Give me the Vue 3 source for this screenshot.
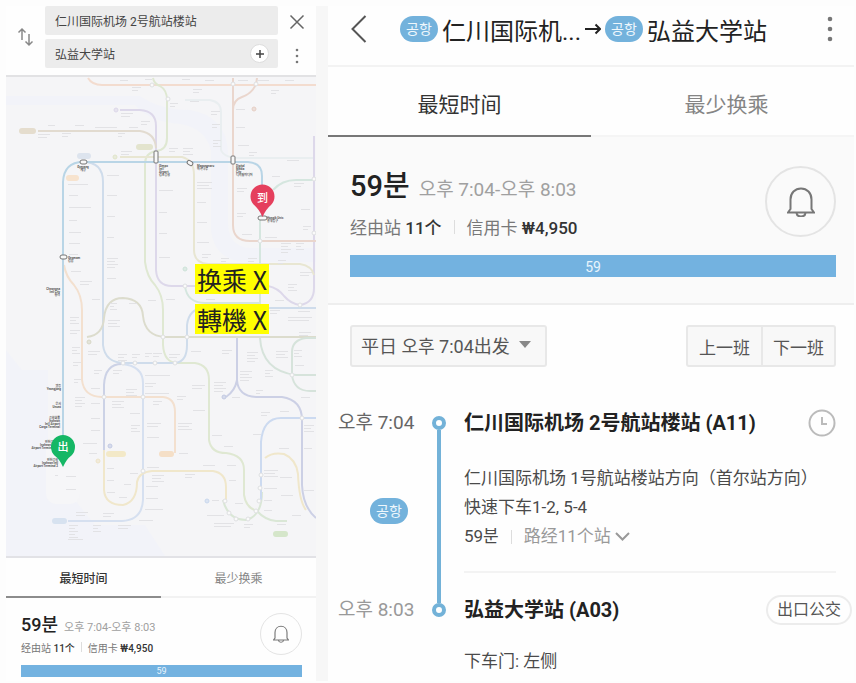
<script setup>
import { ref } from 'vue'

const from = ref('仁川国际机场 2号航站楼站')
const to = ref('弘益大学站')

const lines = [
  { c: '#f3dccf', d: 'M88 78Q92 85 102 85H316' },
  { c: '#dfe8d2', d: 'M153 78Q154 84 160 86Q167 90 167 100V138Q167 150 156 151Q145 153 145 164V262Q147 277 155 285Q163 295 163 310V345Q164 363 178 363H195Q209 365 209 380V440Q211 453 226 453Q244 455 244 470V495Q246 508 257 511' },
  { c: '#e9eef0', d: 'M185 100H210Q221 102 221 112V150Q224 158 240 158H314' },
  { c: '#ddd8ea', d: 'M120 110H140Q156 111 156 126V270Q157 286 172 286H268Q278 288 284 296Q291 304 300 305Q314 303 314 288V136' },
  { c: '#e2dbd0', d: 'M38 131H140Q155 133 156 148' },
  { c: '#ead6cd', d: 'M257 78Q256 92 242 97Q233 100 233 110M233 78V225Q233 241 250 241H316' },
  { c: '#e8e6d2', d: 'M120 157H182Q194 160 194 175V250Q194 263 208 264H300Q312 266 314 275' },
  { c: '#d5e6df', d: 'M260 218V303H205Q187 303 185 286M273 190Q282 180 296 180H314' },
  { c: '#cfdceb', d: 'M83 162Q103 162 103 182V345Q105 363 125 363H176Q187 361 187 345V325Q189 308 205 308H316' },
  { c: '#f3e0cf', d: 'M64 265Q66 277 74 285Q82 295 82 310V380Q84 397 102 397H163Q175 398 175 412V453' },
  { c: '#dcdccd', d: 'M87 337Q103 335 104 318Q106 298 123 298Q142 299 143 316Q145 336 165 337H316' },
  { c: '#ccd2e6', d: 'M104 450V385Q105 364 122 364' },
  { c: '#d6e0f0', d: 'M122 364Q143 366 143 383V500Q142 520 122 521H68' },
  { c: '#f0e7cb', d: 'M104 450V490Q105 505 123 505Q137 502 137 482Q139 472 152 471H213Q226 473 226 487V500' },
  { c: '#dae7d6', d: 'M223 500Q228 520 246 520Q262 516 262 492M257 511Q265 520 276 521H287' },
  { c: '#ccdaf0', d: 'M261 500V442Q263 418 281 418H316' },
  { c: '#f0e7cb', d: 'M265 458Q272 452 284 454Q296 459 298 474Q299 501 306 510' },
  { c: '#ccd0e5', d: 'M237 338V380Q238 396 256 397H282Q302 400 302 420V485Q303 507 316 518M237 380Q235 391 226 397' },
  { c: '#d6e3db', d: 'M260 338Q262 371 296 375H316M316 338H306Q292 340 292 352V375Q294 391 310 391H316' },
]

const pills = [
  { x: 19, y: 128, w: 17, c: '#e5ddce' },
  { x: 136, y: 144, w: 17, c: '#e3e4ce' },
  { x: 77, y: 153, w: 14, c: '#dde4ee' },
  { x: 66, y: 175, w: 13, c: '#f7e3ce' },
  { x: 106, y: 451, w: 20, c: '#f3e9c8' },
  { x: 159, y: 451, w: 15, c: '#f5dfc7' },
  { x: 52, y: 518, w: 15, c: '#d7e2f0' },
  { x: 273, y: 531, w: 15, c: '#d5e6ca' },
]

const rings = [[116, 110, '#ddd8ea'], [115, 157, '#e0e5ca'], [254, 109, '#e6d0c6'], [89, 342, '#d8d8c7'], [185, 269, '#cde3d8'], [224, 397, '#c2cae2'], [110, 446, '#c3cbe4'], [207, 501, '#c9d8ee'], [98, 461, '#eee4c8']]

const stops = [[152, 85], [168, 99], [233, 84], [256, 84], [314, 179], [314, 233], [260, 241], [185, 286], [300, 305], [123, 363], [135, 363], [155, 363], [175, 363], [104, 397], [143, 397], [143, 471], [302, 418], [292, 375], [163, 337], [187, 337], [225, 501], [229, 513], [236, 519], [248, 519], [256, 511], [261, 475], [260, 488], [259, 501]]

// x, y, width, number of rows of a faint station label
const faint = [
  [120, 80, 8, 1], [145, 79, 7, 1], [182, 79, 8, 1], [205, 80, 9, 1], [238, 80, 10, 1], [285, 80, 9, 1], [257, 80, 12, 1], [132, 87, 9, 2], [170, 103, 8, 2], [190, 101, 9, 1], [211, 111, 9, 2], [236, 109, 9, 1], [193, 89, 9, 2], [271, 90, 8, 2],
  [121, 113, 12, 2], [141, 121, 9, 2], [38, 134, 12, 2], [48, 125, 7, 1], [62, 133, 9, 2], [75, 125, 9, 1], [95, 127, 22, 1], [118, 133, 7, 2], [129, 127, 9, 1], [121, 151, 11, 2], [169, 148, 9, 2], [183, 148, 10, 3],
  [212, 124, 8, 2], [213, 140, 8, 3], [236, 127, 9, 1], [238, 145, 11, 1], [249, 152, 8, 2], [287, 160, 12, 1], [68, 184, 20, 1], [69, 195, 9, 1], [69, 207, 22, 1], [69, 220, 8, 1], [69, 232, 12, 1], [69, 243, 11, 1], [69, 254, 9, 1], [71, 271, 10, 1], [80, 281, 12, 2],
  [107, 175, 12, 1], [107, 195, 10, 1], [107, 216, 8, 1], [107, 237, 7, 1], [107, 258, 11, 4], [107, 278, 9, 1], [92, 299, 8, 1], [110, 303, 7, 3], [129, 303, 8, 1], [148, 300, 8, 1], [166, 299, 9, 1], [159, 190, 14, 1], [159, 212, 8, 1], [159, 233, 8, 1], [159, 257, 11, 1],
  [197, 182, 15, 3], [197, 202, 9, 1], [197, 222, 10, 1], [197, 242, 12, 1], [202, 254, 9, 2], [221, 258, 8, 2], [237, 188, 10, 2], [237, 213, 9, 2], [242, 234, 10, 1], [265, 237, 12, 1], [281, 243, 10, 4], [296, 243, 8, 3], [272, 176, 8, 1], [294, 183, 10, 2], [301, 209, 9, 1], [303, 226, 8, 2],
  [221, 265, 10, 2], [248, 258, 9, 2], [278, 260, 8, 2], [300, 272, 12, 2], [288, 284, 9, 3], [270, 310, 10, 2], [288, 317, 24, 2], [275, 300, 9, 1], [298, 311, 12, 1], [206, 299, 9, 1],
  [70, 317, 9, 3], [70, 330, 10, 2], [72, 347, 8, 3], [73, 362, 8, 2], [74, 379, 7, 2], [88, 351, 12, 2], [94, 370, 8, 2], [108, 320, 12, 3], [118, 354, 9, 3], [132, 354, 8, 2], [145, 353, 7, 2], [153, 353, 9, 2], [169, 354, 11, 2], [191, 351, 10, 1],
  [145, 375, 25, 1], [145, 383, 11, 2], [113, 370, 9, 2], [126, 389, 11, 3], [145, 393, 24, 1], [112, 401, 12, 3], [130, 413, 10, 1], [75, 397, 10, 4], [91, 388, 9, 1], [91, 403, 9, 1], [91, 418, 9, 1], [91, 430, 9, 1], [83, 443, 14, 1], [89, 453, 8, 1],
  [131, 425, 9, 3], [147, 423, 14, 2], [147, 437, 12, 1], [178, 423, 14, 3], [179, 453, 9, 1], [177, 396, 9, 2], [153, 401, 9, 2], [192, 385, 13, 2], [193, 410, 12, 1], [212, 435, 10, 1], [224, 446, 9, 1], [227, 465, 9, 1], [229, 480, 7, 1], [235, 503, 8, 1],
  [147, 467, 12, 1], [152, 475, 12, 3], [185, 474, 10, 2], [203, 465, 12, 1], [107, 468, 7, 1], [107, 480, 7, 1], [107, 492, 8, 1], [124, 484, 7, 1], [130, 473, 8, 1], [119, 497, 8, 1], [146, 486, 12, 1], [146, 498, 12, 1], [145, 509, 18, 1], [139, 520, 14, 1],
  [69, 525, 9, 5], [76, 512, 12, 2], [103, 513, 11, 2], [93, 525, 8, 3], [118, 525, 13, 2], [68, 539, 15, 1], [66, 476, 10, 1], [66, 489, 10, 1], [55, 475, 3, 1], [214, 382, 12, 4], [240, 371, 12, 4], [247, 352, 11, 4], [222, 350, 10, 2], [232, 397, 8, 1], [256, 390, 7, 2],
  [265, 370, 8, 3], [276, 351, 12, 3], [294, 350, 8, 3], [295, 365, 9, 1], [301, 397, 9, 1], [280, 411, 9, 1], [261, 412, 9, 2], [253, 434, 8, 1], [304, 425, 10, 3], [304, 448, 8, 1], [264, 470, 14, 3], [264, 488, 13, 1], [264, 500, 8, 1], [264, 510, 8, 1], [279, 448, 10, 1],
  [280, 477, 12, 1], [281, 495, 12, 1], [207, 515, 17, 1], [214, 523, 20, 2], [244, 524, 9, 2], [277, 524, 9, 1], [292, 515, 9, 1], [304, 490, 10, 1], [212, 500, 7, 1], [299, 332, 12, 2],
]
const bars = faint.flatMap(([x, y, w, n]) =>
  Array.from({ length: n }, (_, i) => ({ x, y: y + i * 3, w: i % 2 ? w - 3 : w })))

const names = [
  [83, 168, 'middle', ['Gyeyang', '계양']],
  [68, 259, 'start', ['Geomam', '검암']],
  [159, 167, 'start', ['Gimpo', "Int'l", 'Airport', '김포공항']],
  [197, 167, 'start', ['Magongnaru', '마곡나루']],
  [236, 167, 'start', ['Digital', 'Media', 'City', '디지털미디어']],
  [267, 219, 'start', ['Hongik Univ.', '홍대입구']],
  [60, 290, 'end', ['Cheongna', 'Intl City', '청라']],
  [61, 387, 'end', ['영종', 'Yeongjong']],
  [61, 405, 'end', ['운서', 'Unseo']],
  [60, 419, 'end', ['공항화물', 'Incheon', "Int'l Airport", 'Cargo Terminal']],
  [56, 443, 'end', ['인천공항', 'Incheon Intl', 'Airport Terminal 1']],
  [58, 461, 'end', ['인천공항', 'Incheon Intl', 'Airport Terminal 2']],
]
</script>

<template>
  <main class="page">
    <section class="panel overview">
      <form class="search" @submit.prevent>
        <button type="button" class="icon swap" aria-label="交换">
          <svg width="18" height="20" viewBox="0 0 18 20"><path d="M5 13V2M1.500 5.500L5 2L8.500 5.500M12 7V18M8.500 14.500L12 18L15.500 14.500" /></svg>
        </button>
        <div class="fields">
          <div class="field"><input v-model="from" aria-label="出发站" /></div>
          <div class="field">
            <input v-model="to" aria-label="到达站" />
            <button type="button" class="icon add" aria-label="添加">
              <svg width="10" height="10" viewBox="0 0 10 10"><path d="M5 1V9M1 5H9" /></svg>
            </button>
          </div>
        </div>
        <div class="side">
          <button type="button" class="icon" aria-label="关闭">
            <svg width="16" height="16" viewBox="0 0 16 16"><path d="M1.500 1.500L14.500 14.500M14.500 1.500L1.500 14.500" /></svg>
          </button>
          <button type="button" class="icon dots" aria-label="更多">
            <svg width="4" height="16" viewBox="0 0 4 16"><circle cx="2" cy="2" r="1.300" /><circle cx="2" cy="8" r="1.300" /><circle cx="2" cy="14" r="1.300" /></svg>
          </button>
        </div>
      </form>

      <div class="map">
        <svg class="network" viewBox="6 77 310 479" preserveAspectRatio="xMidYMid slice">
          <path class="water" d="M6 96H140Q160 110 190 110Q225 116 228 150V225Q230 247 250 248H316V262H245Q214 260 211 230V150Q205 128 180 124Q150 122 135 105H6ZM6 350L22 370H48V556H6ZM48 500H75L95 525H145L165 556H48Z" />
          <rect class="island" x="46" y="440" width="34" height="64" rx="10" />
          <path v-for="(l, i) in lines" :key="'l' + i" class="line" :d="l.d" :stroke="l.c" />
          <rect v-for="(p, i) in pills" :key="'p' + i" :x="p.x" :y="p.y" :width="p.w" height="6" rx="3" :fill="p.c" />
          <circle v-for="([x, y, c], i) in rings" :key="'r' + i" :cx="x" :cy="y" r="2" :fill="c" :stroke="c" fill-opacity=".6" />
          <rect v-for="(b, i) in bars" :key="'b' + i" class="label" :x="b.x" :y="b.y" :width="b.w" height="1" />
          <circle v-for="([x, y], i) in stops" :key="'s' + i" class="stop" :cx="x" :cy="y" r="2" />
          <path class="route" d="M63 460V182Q64 162 83 162H248Q262 163 262 176V216" />
          <g class="hub">
            <rect x="80" y="160" width="7" height="4" rx="2" />
            <rect x="60" y="255" width="7" height="4" rx="2" />
            <rect x="154" y="151" width="4" height="12" rx="1" />
            <rect x="187" y="161" width="6" height="4" rx="2" transform="rotate(35 190 163)" />
            <rect x="231" y="156" width="4" height="8" rx="1" />
            <rect x="258" y="216" width="9" height="4" rx="2" />
          </g>
          <text v-for="([x, y, a, rows], i) in names" :key="'n' + i" class="name" :text-anchor="a">
            <tspan v-for="(r, k) in rows" :key="k" :x="x" :y="y + k * 3">{{ r }}</tspan>
          </text>
          <path fill="#e53f5d" d="M262.500 217Q259 209 254 205A12 12 0 1 1 271 205Q266 209 262.500 217Z" />
          <text class="pin" x="262.500" y="202">到</text>
          <path fill="#15b765" d="M63 467Q59.500 459 54.500 455.500A12 12 0 1 1 71.500 455.500Q66.500 459 63 467Z" />
          <text class="pin" x="63" y="451">出</text>
        </svg>
        <div class="notes">
          <mark>换乘 X</mark>
          <mark>轉機 X</mark>
        </div>
      </div>

      <nav class="tabs">
        <button type="button" class="tab active">最短时间</button>
        <button type="button" class="tab">最少换乘</button>
      </nav>
      <div class="summary">
        <div class="top">
          <div class="facts">
            <p class="lead"><strong>59분</strong><span>오후 7:04-오후 8:03</span></p>
            <p class="meta">经由站 <b>11个</b><i></i>信用卡 <b>₩4,950</b></p>
          </div>
          <button type="button" class="bell" aria-label="提醒">
            <svg viewBox="0 0 28 30"><path d="M1 25.500H27L24.500 22V12.500C24.500 6 20 1.500 14 1.500S3.500 6 3.500 12.500V22ZM9.500 26Q10 29.500 14 29.500T18.500 26" /></svg>
          </button>
        </div>
        <div class="bar">59</div>
      </div>
    </section>

    <section class="panel detail">
      <header class="head">
        <button type="button" class="icon back" aria-label="返回">
          <svg width="16" height="28" viewBox="0 0 16 28"><path d="M14.500 1L1.500 14L14.500 27" /></svg>
        </button>
        <h1>
          <span class="badge">공항</span><span>仁川国际机...</span>
          <svg class="arrow" width="16" height="12" viewBox="0 0 16 12"><path d="M0 6H15M10.500 1.500L15 6L10.500 10.500" /></svg>
          <span class="badge">공항</span><span>弘益大学站</span>
        </h1>
        <button type="button" class="icon dots" aria-label="更多">
          <svg width="6" height="26" viewBox="0 0 6 26"><circle cx="3" cy="3" r="2.300" /><circle cx="3" cy="13" r="2.300" /><circle cx="3" cy="23" r="2.300" /></svg>
        </button>
      </header>
      <nav class="tabs">
        <button type="button" class="tab active">最短时间</button>
        <button type="button" class="tab">最少换乘</button>
      </nav>
      <div class="summary">
        <div class="top">
          <div class="facts">
            <p class="lead"><strong>59분</strong><span>오후 7:04-오후 8:03</span></p>
            <p class="meta">经由站 <b>11个</b><i></i>信用卡 <b>₩4,950</b></p>
          </div>
          <button type="button" class="bell" aria-label="提醒">
            <svg viewBox="0 0 28 30"><path d="M1 25.500H27L24.500 22V12.500C24.500 6 20 1.500 14 1.500S3.500 6 3.500 12.500V22ZM9.500 26Q10 29.500 14 29.500T18.500 26" /></svg>
          </button>
        </div>
        <div class="bar">59</div>
      </div>

      <div class="toolbar">
        <div class="depart">
          <select aria-label="出发时间"><option>平日 오후 7:04出发</option></select>
          <svg width="12" height="7" viewBox="0 0 12 7"><path d="M0 0H12L6 7Z" /></svg>
        </div>
        <div class="pair">
          <button type="button">上一班</button>
          <button type="button">下一班</button>
        </div>
      </div>

      <ol class="steps">
        <li>
          <div class="when"><time>오후 7:04</time><span class="badge">공항</span></div>
          <div class="rail"><span class="dot"></span></div>
          <div class="info">
            <div class="title">
              <h2>仁川国际机场 2号航站楼站 (A11)</h2>
              <button type="button" class="icon clock" aria-label="时刻表">
                <svg width="28" height="28" viewBox="0 0 28 28"><circle cx="14" cy="14" r="12.500" /><path d="M14 8V15H19" /></svg>
              </button>
            </div>
            <p class="first">仁川国际机场 1号航站楼站方向（首尔站方向）</p>
            <p>快速下车1-2, 5-4</p>
            <p class="via">59분<i></i>
              <button type="button" class="more">路经11个站<svg width="15" height="9" viewBox="0 0 15 9"><path d="M1 1L7.500 7.500L14 1" /></svg></button>
            </p>
            <hr />
          </div>
        </li>
        <li>
          <div class="when late"><time>오후 8:03</time></div>
          <div class="rail"><span class="dot"></span></div>
          <div class="info">
            <div class="title">
              <h2>弘益大学站 (A03)</h2>
              <button type="button" class="exit">出口公交</button>
            </div>
            <p class="door">下车门: 左侧</p>
          </div>
        </li>
      </ol>
    </section>
  </main>
</template>

<style>
body { margin: 0; background: #fff; }
</style>

<style scoped>
* { box-sizing: border-box; }
.page {
  display: grid;
  grid-template-columns: minmax(0, 310fr) minmax(0, 526fr);
  gap: 12px;
  min-height: 100vh;
  border: solid #fdfdfd;
  border-width: 6px 2px 2px 6px;
  background: #f7f7f7;
  color: #4a4a4a;
  font-family: Roboto, "Noto Sans CJK SC", sans-serif;
}
.panel { display: flex; flex-direction: column; min-width: 0; background: #fefefe; }
h1, h2, p, ol { margin: 0; padding: 0; font-weight: 400; }
button, input, select { margin: 0; padding: 0; border: 0; background: none; color: inherit; font: inherit; }
svg { display: block; fill: none; stroke: currentColor; }
.icon { display: flex; align-items: center; justify-content: center; }
.dots svg { fill: #777; stroke: none; }

.search { display: grid; grid-template-columns: 39px 1fr 38px; padding-bottom: 7px; border-bottom: 2px solid #e2e2e4; }
.swap { color: #888; }
.swap svg { stroke-width: 1.500; }
.fields { display: grid; gap: 4px; }
.field { display: flex; align-items: center; height: 29px; padding: 0 9px 0 10px; border-radius: 2px; background: #ececec; font-size: 12px; color: #444; }
.field input { flex: 1; min-width: 0; outline: 0; }
.add { width: 19px; height: 19px; border: 1px solid #ddd; border-radius: 50%; background: #fff; color: #444; }
.add svg { stroke-width: 1.500; }
.side { display: grid; grid-template-rows: 1fr 1fr; color: #666; }
.side svg { stroke-width: 1.500; }
.dots { padding-top: 6px; }

.map { position: relative; flex: 1; min-height: 400px; overflow: hidden; border-bottom: 2px solid #e2e2e6; background: #f5f5f7; }
.network { position: absolute; inset: 0; width: 100%; height: 100%; stroke: none; }
.water { fill: #f2f3f9; }
.island { fill: #f6f6f8; }
.line { fill: none; stroke-width: 2; }
.label { fill: #e2e2e5; }
.stop { fill: #fafafa; stroke: #dfe0e2; }
.route { fill: none; stroke: #b9d5e6; stroke-width: 2; }
.hub { fill: #f8f8f8; stroke: #777; }
.name { fill: #555; font-size: 3px; font-weight: 700; }
.pin { fill: #fff; font-size: 11px; font-weight: 500; text-anchor: middle; }
.notes { position: absolute; top: 39%; left: 61%; display: grid; justify-items: start; gap: 10px; }
mark { padding: 0 2px; background: #ff0; color: #222; font: 400 25px/30px "Noto Sans CJK TC", sans-serif; }

.tabs { display: grid; grid-template-columns: 1fr 1fr; }
.tab { height: 40px; border-bottom: 2px solid #f2f2f2; color: #858585; font-size: 12px; }
.active { border-bottom-color: #8c8c8c; color: #333; font-weight: 500; }

.summary { padding: 15px 14px 4px 15px; }
.top { display: flex; justify-content: space-between; align-items: flex-start; }
.facts { white-space: nowrap; }
.lead { display: flex; align-items: baseline; gap: 6px; line-height: 24px; color: #a0a0a0; font-size: 11px; }
.lead strong { color: #222; font-size: 18px; font-weight: 500; }
.meta { line-height: 18px; color: #777; font-size: 10px; }
.meta b { color: #333; font-weight: 500; }
i { display: inline-block; width: 1px; height: 10px; margin: 0 6px; background: #ddd; }
.bell { display: grid; place-items: center; width: 42px; height: 42px; border: 1px solid #e4e4e4; border-radius: 50%; color: #777; }
.bell svg { width: 16px; height: 18px; stroke-width: 2; }
.bar { margin-top: 7px; height: 12px; background: #73b2e0; color: #e8f4fc; font-size: 9px; line-height: 13px; text-align: center; }

.head { display: grid; grid-template-columns: 62px 1fr 48px; align-items: center; height: 61px; padding-bottom: 13px; border-bottom: 2px solid #f3f3f3; color: #333; }
.back { color: #555; }
.back svg { stroke-width: 2; }
.head .dots { padding: 0; }
.head h1 { display: flex; align-items: center; gap: 4px; padding-left: 10px; font-size: 24px; white-space: nowrap; color: #222; }
.arrow { stroke-width: 2; }
.badge { display: inline-block; width: 38px; height: 26px; border-radius: 13px; background: #73b2dc; color: #eef7fc; font-size: 14px; line-height: 26px; text-align: center; }

.detail .tab { height: 70px; padding-top: 3px; border-color: #f5f5f5; font-size: 21px; }
.detail .tab + .tab { padding-left: 8px; }
.detail .active { border-color: #777; font-weight: 400; }
.detail .summary { padding: 29px 18px 26px 22px; border-bottom: 2px solid #eee; background: #fafafa; }
.detail .lead { gap: 9px; line-height: 40px; font-size: 19px; }
.detail .lead strong { font-size: 29px; }
.detail .meta { margin-top: 4px; line-height: 28px; font-size: 17px; }
.detail i { height: 14px; margin: 0 12px; }
.detail .bell { width: 71px; height: 71px; border-width: 2px; }
.detail .bell svg { width: 28px; height: 30px; }
.detail .bar { margin-top: 13px; height: 22px; font-size: 14px; line-height: 24px; }

.toolbar { display: flex; justify-content: space-between; padding: 20px 18px 0 22px; color: #555; font-size: 17px; }
.depart, .pair { display: flex; height: 42px; border: 2px solid #e8e8e8; border-radius: 3px; background: #f8f8f8; }
.depart { position: relative; }
.depart select { padding: 0 35px 0 9px; appearance: none; font-size: 18px; }
.depart svg { position: absolute; top: 14px; right: 14px; fill: #888; stroke: none; pointer-events: none; }
.pair button { width: 73px; }
.pair button + button { border-left: 2px solid #e8e8e8; }

.steps { list-style: none; padding: 44px 18px 5px 10px; }
.steps li { display: grid; grid-template-columns: 88px 26px minmax(0, 1fr); }
.when { display: flex; flex-direction: column; line-height: 24px; font-size: 19px; color: #666; }
.late { color: #999; }
.when .badge { margin: 63px 0 0 32px; }
.rail { display: flex; flex-direction: column; align-items: center; }
.rail::before { content: ""; width: 4px; height: 5px; }
li + li .rail::before { background: #73b2d8; }
.dot { width: 14px; height: 14px; border: 4px solid #73b2d8; border-radius: 50%; background: #fff; }
li:first-child .rail::after { content: ""; flex: 1; width: 4px; background: #73b2d8; }
.info { padding-left: 12px; font-size: 17px; line-height: 29px; white-space: nowrap; }
.title { display: flex; justify-content: space-between; align-items: center; height: 24px; }
.title h2 { color: #222; font-size: 20px; font-weight: 700; }
.clock { color: #bbb; }
.clock svg { stroke-width: 2; }
.first { margin-top: 29px; }
.via { display: flex; align-items: center; }
.more { display: flex; align-items: center; gap: 4px; color: #999; }
.more svg { stroke-width: 2; }
hr { height: 2px; margin: 20px 0 25px; border: 0; background: #f3f3f3; }
.exit { flex: none; height: 30px; margin-right: -16px; padding: 0 9px; border: 2px solid #ececec; border-radius: 15px; color: #555; font-size: 16px; line-height: 26px; }
.door { margin-top: 25px; }
</style>
